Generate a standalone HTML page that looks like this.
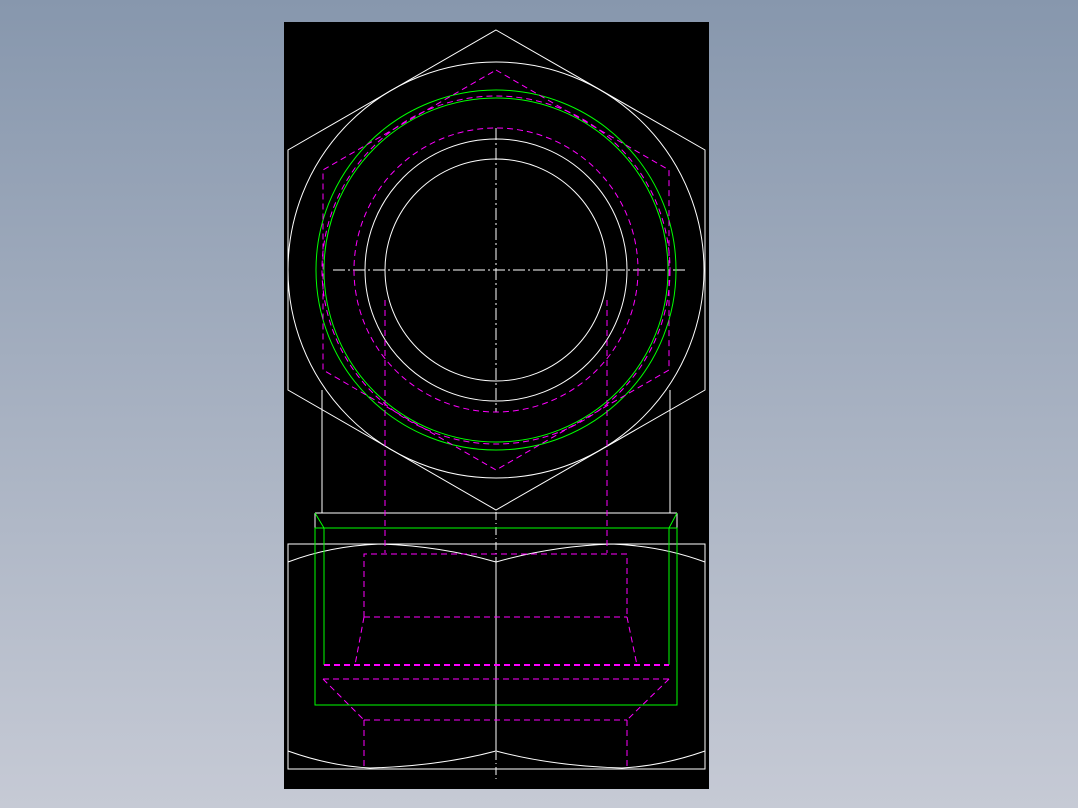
<!DOCTYPE html><html><head><style>
html,body{margin:0;padding:0;width:1078px;height:808px;overflow:hidden;background:linear-gradient(#8797ad,#c6cad5);}
svg{position:absolute;left:0;top:0}
</style></head><body>
<svg width="1078" height="808" viewBox="0 0 1078 808" fill="none" stroke-width="1">
<rect x="284" y="22" width="425" height="767" fill="#000"/>
<g stroke="#fff">
<polygon points="496,30 705,150 705,390 496,510 288,390 288,150"/>
<circle cx="496" cy="270" r="208"/>
<circle cx="496" cy="270" r="131"/>
<circle cx="496" cy="270" r="111"/>
<line x1="322" y1="390" x2="322" y2="513"/>
<line x1="670" y1="390" x2="670" y2="513"/>
<line x1="315" y1="513" x2="677" y2="513"/>
<line x1="315" y1="513" x2="315" y2="528"/>
<line x1="677" y1="513" x2="677" y2="528"/>
<rect x="288" y="544" width="417" height="225"/>
<path d="M288,562 Q330,546 380,544 Q440,546 496,562 Q552,546 612,544 Q662,546 705,562"/>
<path d="M288,751 Q330,766 370,768 Q440,766 496,751 Q552,766 622,768 Q662,766 705,751"/>
<line x1="496" y1="562" x2="496" y2="751"/>
<line x1="496" y1="512" x2="496" y2="780" stroke-dasharray="8,3,1,3"/>
<line x1="333" y1="270" x2="685" y2="270" stroke-dasharray="12,3,2,3"/>
<line x1="496" y1="128" x2="496" y2="412" stroke-dasharray="12,3,2,3"/>
</g>
<g stroke="#0f0">
<circle cx="496" cy="270" r="180"/>
<circle cx="496" cy="270" r="172"/>
<line x1="315" y1="528" x2="677" y2="528"/>
<rect x="315" y="528" width="362" height="177"/>
<line x1="324" y1="528" x2="324" y2="665"/>
<line x1="669" y1="528" x2="669" y2="665"/>
<line x1="315" y1="513" x2="324" y2="528"/>
<line x1="677" y1="513" x2="669" y2="528"/>
</g>
<g stroke="#f0f" stroke-dasharray="6,4">
<polygon points="496,70 669,170 669,370 496,470 323,370 323,170"/>
<circle cx="496" cy="270" r="142"/>
<circle cx="496" cy="270" r="174"/>
<line x1="385" y1="300" x2="385" y2="553"/>
<line x1="607" y1="300" x2="607" y2="553"/>
<polyline points="364,617 364,554 627,554 627,617"/>
<line x1="364" y1="617" x2="627" y2="617"/>
<line x1="364" y1="617" x2="355" y2="665"/>
<line x1="627" y1="617" x2="637" y2="665"/>
<line x1="324" y1="665" x2="669" y2="665" stroke-width="2"/>
<line x1="323" y1="679" x2="669" y2="679"/>
<line x1="323" y1="679" x2="364" y2="720"/>
<line x1="669" y1="679" x2="627" y2="720"/>
<line x1="364" y1="720" x2="627" y2="720"/>
<line x1="364" y1="720" x2="364" y2="769"/>
<line x1="627" y1="720" x2="627" y2="769"/>
</g>
</svg>
</body></html>
